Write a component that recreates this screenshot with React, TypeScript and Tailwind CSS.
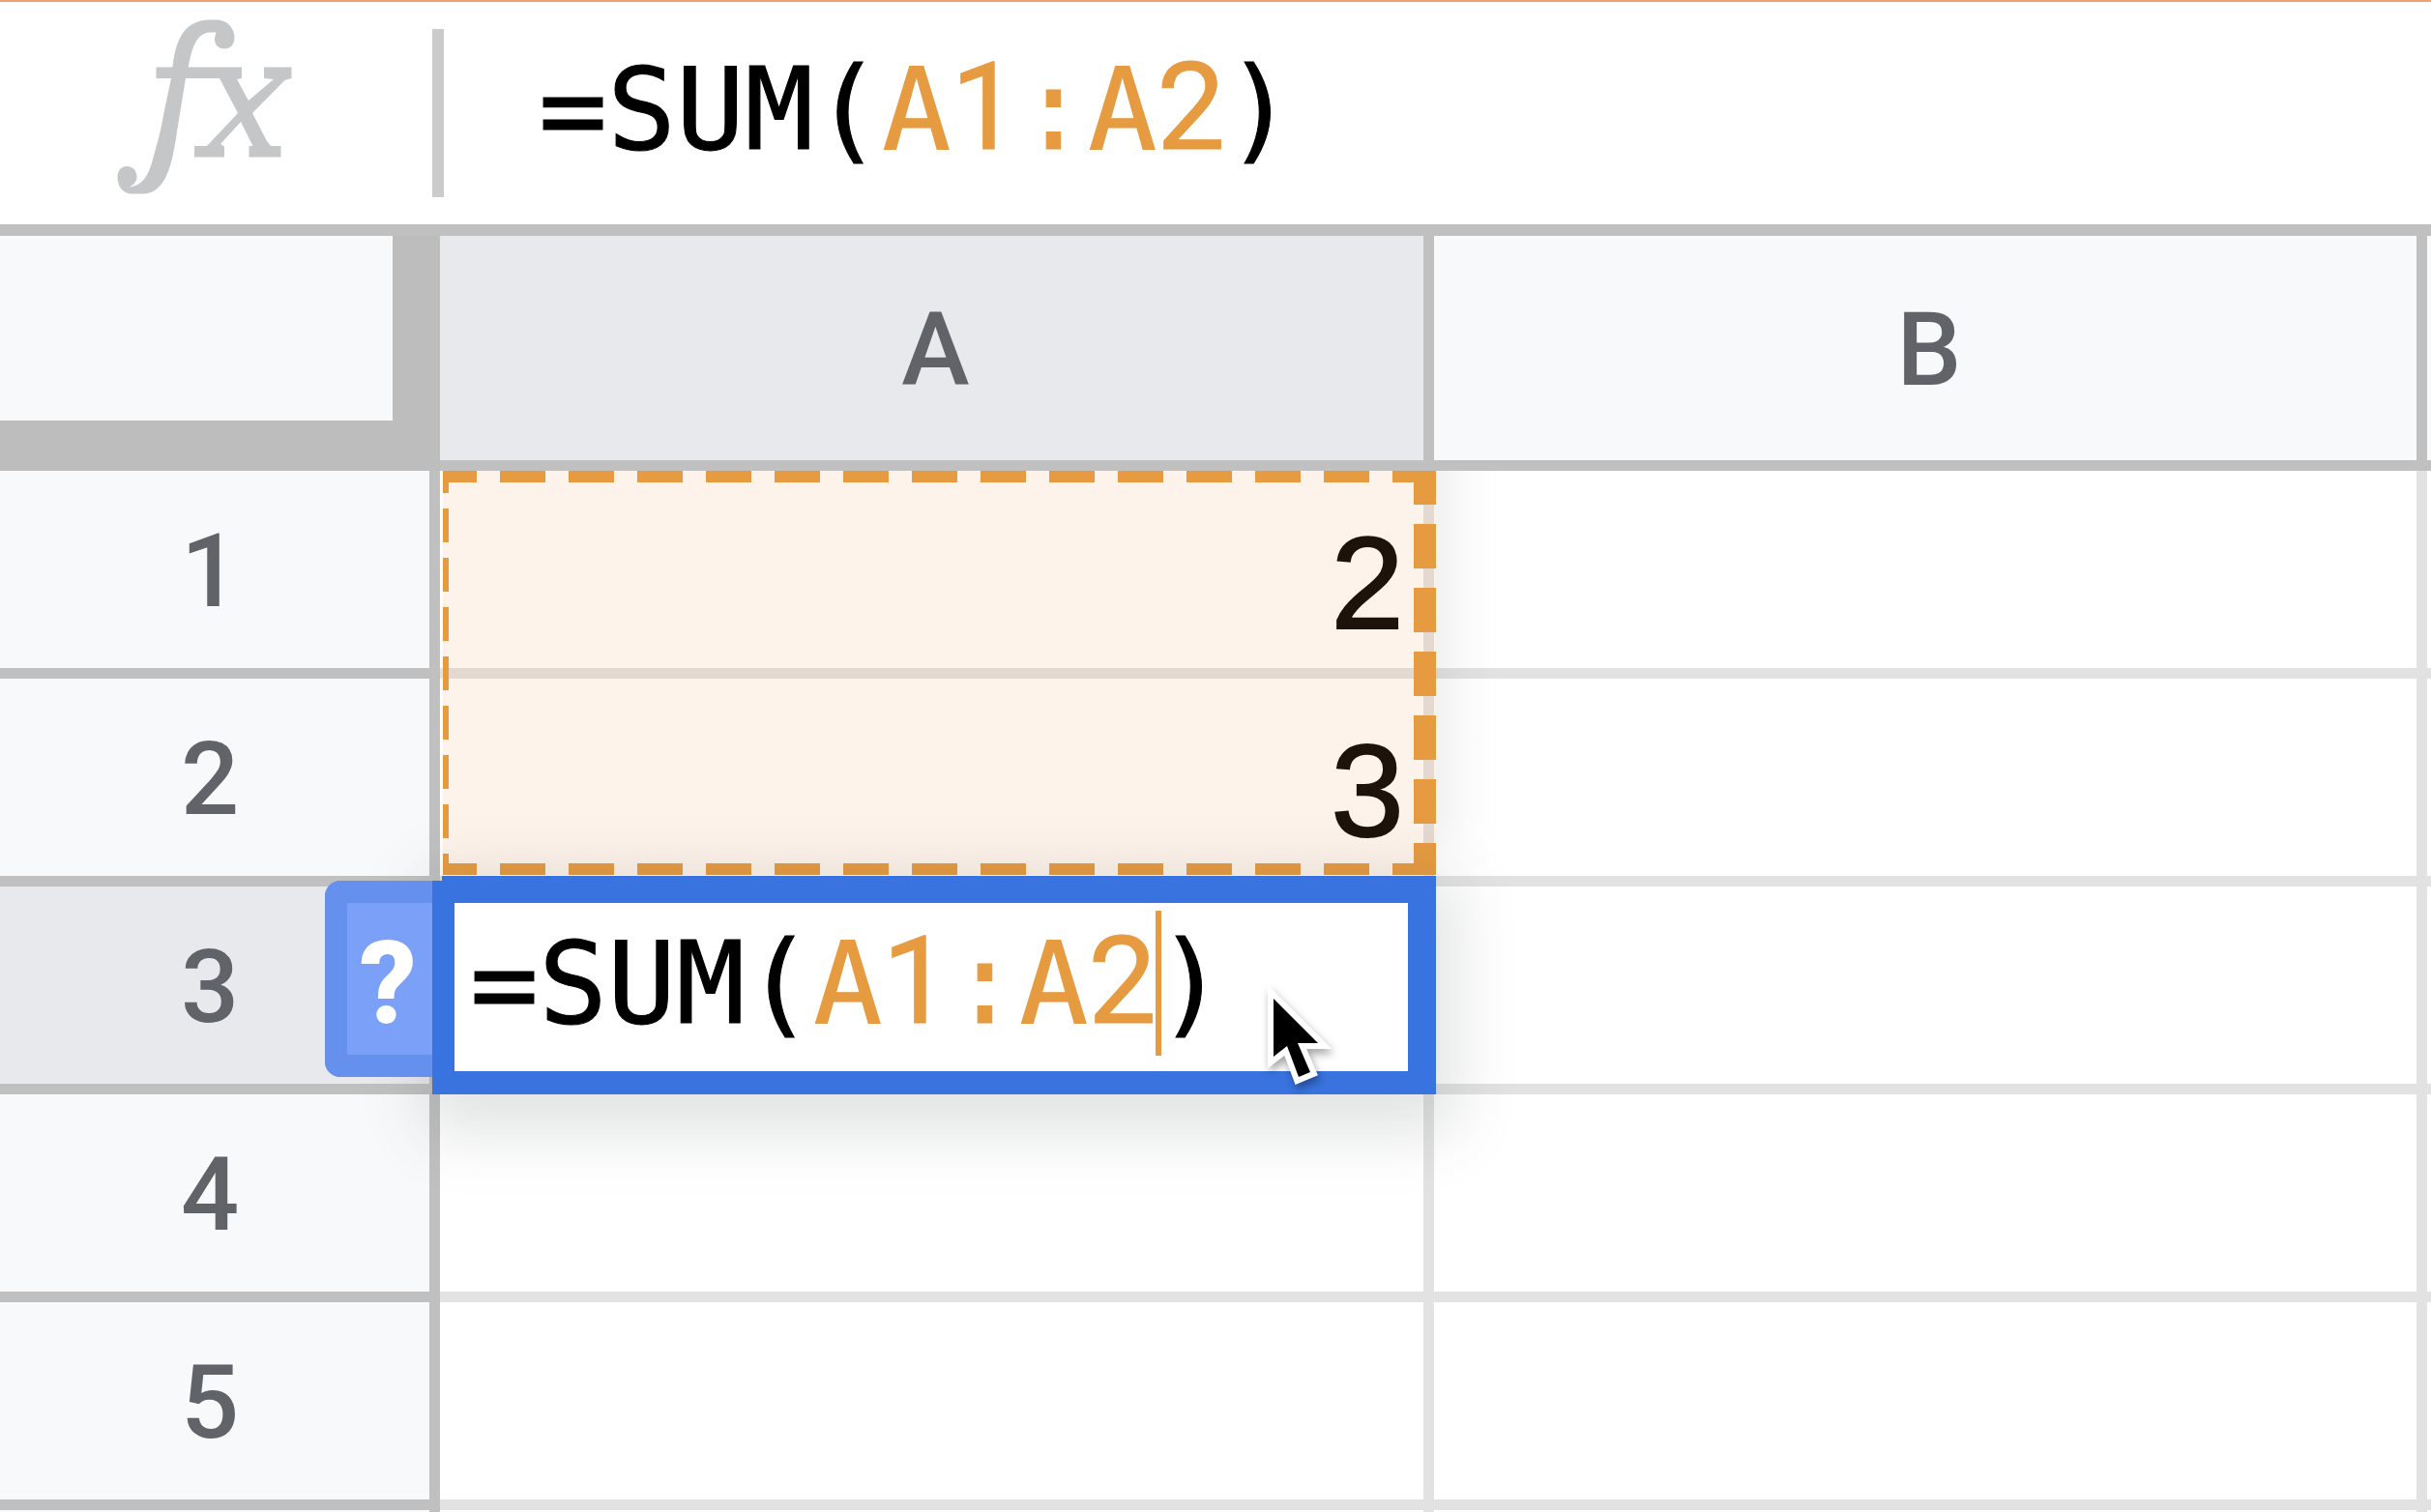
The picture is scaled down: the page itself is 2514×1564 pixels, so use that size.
import { useState } from "react";

const ROWS = [
  { n: 1, a: "2" },
  { n: 2, a: "3" },
  { n: 3, a: "" },
  { n: 4, a: "" },
  { n: 5, a: "" },
];

function FxIcon() {
  return (
    <svg viewBox="120 18 184 186" className="h-[186px] w-[184px] shrink-0 fill-[#c4c6c8]" aria-hidden="true">
      <path d="M161.500 69.500H178.500C181 48 187 20.500 217 20.500H224C236 20.500 242.500 30 242.500 39C242.500 46 238 50.500 232 50.500C226 50.500 222 46 222 41C222 38 223 36 223.500 33.500H217C203 34 198 51 194.800 69.500H250V81L245 82L257 104L283 82L273 81V69.500H301.500V81L294.500 83L261 117L276 146L280 151H290.500V162.500H257.500V151H261.500L249 126L228 149L232 151.500V162.500H201V151H214L246 117L227 81H192L183 136C178 172 171 200.500 147 200.500H137C127 200.500 121.500 193 121.500 183C121.500 177 125 172 131 172C138 172 141.500 177 141.500 183C141.500 188 138 191 134 193.500C147 192 153 183 158 165C163 147 167 132 169 119L177 81H161.500Z" />
    </svg>
  );
}

function Formula({ caret = false }: { caret?: boolean }) {
  return (
    <div
      aria-hidden="true"
      className="relative whitespace-pre font-['DejaVu_Sans_Mono',monospace] text-[118px] leading-[150px] text-black [-webkit-text-stroke:1px_currentColor]"
    >
      =SUM(
      <span className="text-[#e69b41]">
        A<Digit>1</Digit>:A<Digit>2</Digit>
      </span>
      {caret && <span className="absolute top-0 -ml-px h-[150px] w-[6px] bg-[#e69b41]" />}
      )
    </div>
  );
}

function Digit({ children }: { children: string }) {
  return <span className="font-[Roboto,sans-serif] text-[126px] leading-none">{children}</span>;
}

function RangeHighlight() {
  return (
    <div className="pointer-events-none absolute left-[3px] top-0 z-10 h-[418px] w-[1027px] bg-[#f29c4f]/12">
      <div className="absolute inset-x-0 top-0 h-3 bg-[repeating-linear-gradient(90deg,#e69b41_0_35px,transparent_35px_59px,#e69b41_59px_71px)]" />
      <div className="absolute inset-x-0 bottom-0 h-3 bg-[repeating-linear-gradient(90deg,#e69b41_0_35px,transparent_35px_59px,#e69b41_59px_71px)]" />
      <div className="absolute inset-y-0 left-0 w-1.5 bg-[repeating-linear-gradient(180deg,#e69b41_0_23px,transparent_23px_39px,#e69b41_39px_51px)]" />
      <div className="absolute inset-y-0 right-0 w-[23px] bg-[repeating-linear-gradient(180deg,#e69b41_0_35px,transparent_35px_55px,#e69b41_55px_66px)]" />
      <div className="absolute inset-y-0 left-full w-16 bg-[linear-gradient(90deg,rgba(60,64,67,0.07),rgba(60,64,67,0.02)_55%,transparent)] [mask-image:linear-gradient(#000_85%,transparent)]" />
    </div>
  );
}

function Pointer() {
  return (
    <svg
      viewBox="1300 1010 90 130"
      className="pointer-events-none absolute left-[830px] top-[76px] z-10 h-[130px] w-[90px] drop-shadow-[2px_5px_4px_rgba(0,0,0,0.35)]"
      aria-hidden="true"
    >
      <path
        d="M1317 1033V1093L1331 1082L1343 1114L1355 1109L1342 1079H1363Z"
        fill="#000"
        stroke="#fff"
        strokeWidth="12"
        strokeLinejoin="miter"
        paintOrder="stroke"
      />
    </svg>
  );
}

function CellEditor({ value, onChange }: { value: string; onChange: (v: string) => void }) {
  return (
    <>
      <div className="absolute left-[2px] top-[-11px] z-20 h-[226px] w-[1028px] bg-[#3873df] shadow-[0_20px_61px_20px_rgba(60,64,67,0.15)]" />
      <button
        type="button"
        aria-label="Formula help"
        className="absolute left-[-119px] top-[-6px] z-20 flex h-[203px] w-[111px] items-center justify-center rounded-l-[16px] border-[23px] border-r-0 border-[#6690ee] bg-[#7aa0f8] pr-1 pt-2 font-[Roboto,sans-serif] text-[116px] font-bold leading-none text-white"
      >
        ?
      </button>
      <div className="absolute left-[-8px] top-[-6px] z-20 flex h-[221px] w-[1032px] items-center border-[23px] border-b-[24px] border-[#3873df] bg-white pb-2 pl-4">
        <Formula caret />
        <input
          aria-label="Cell A3"
          value={value}
          onChange={(e) => onChange(e.target.value)}
          className="absolute inset-0 bg-transparent pl-4 font-['DejaVu_Sans_Mono',monospace] text-[118px] text-transparent outline-none"
        />
        <Pointer />
      </div>
    </>
  );
}

const head = "border-b-[11px] border-r-[11px] border-[#c0c0c0] pb-0 pt-1 text-center align-middle font-[Roboto,sans-serif] text-[106px] font-medium leading-none text-[#606368]";
const cell = "relative border-b-[11px] border-r-[11px] border-[#e2e2e2] bg-white p-0";

export default function App() {
  const [formula, setFormula] = useState("=SUM(A1:A2)");

  return (
    <main className="h-screen overflow-hidden bg-white">
      <header className="flex h-[244px] items-center border-b-[12px] border-t-2 border-b-[#c0c0c0] border-t-[#e9a271]">
        <div className="flex w-[447px] shrink-0 justify-center pb-3 pr-[23px]">
          <FxIcon />
        </div>
        <div className="h-[174px] w-3 shrink-0 bg-[#cbcbcb]" />
        <div className="relative flex h-full flex-1 items-center pb-2 pl-[98px]">
          <Formula />
          <input
            aria-label="Formula bar"
            value={formula}
            onChange={(e) => setFormula(e.target.value)}
            className="absolute inset-0 bg-transparent pl-[98px] font-['DejaVu_Sans_Mono',monospace] text-[118px] text-transparent outline-none"
          />
        </div>
      </header>

      <table className="w-full table-fixed border-separate border-spacing-0">
        <colgroup>
          <col className="w-[455px]" />
          <col className="w-[1028px]" />
          <col className="w-[1027px]" />
          <col />
        </colgroup>
        <thead>
          <tr className="h-[243px]">
            <td className="border-b-[52px] border-r-[49px] border-[#bdbdbd] bg-[#f8f9fb] p-0" />
            <th scope="col" className={`${head} bg-[#e8e9ed] pl-2 pr-0`}>A</th>
            <th scope="col" className={`${head} bg-[#f8f9fb] pl-2 pr-0`}>B</th>
            <td className="border-b-[11px] border-[#c0c0c0] bg-[#f8f9fb] p-0" />
          </tr>
        </thead>
        <tbody>
          {ROWS.map((row) => (
            <tr key={row.n} className="h-[215px]">
              <th scope="row" className={`${head} pl-0 pr-2.5 ${row.n === 3 ? "bg-[#e8e9ed]" : "bg-[#f8f9fb]"}`}>
                {row.n}
              </th>
              <td
                className={`${cell} pb-2.5 pr-5 text-right align-bottom font-['Liberation_Sans',sans-serif] text-[136px] leading-[156px] text-black [-webkit-text-stroke:2px_currentColor]`}
              >
                {row.a}
                {row.n === 1 && <RangeHighlight />}
                {row.n === 3 && <CellEditor value={formula} onChange={setFormula} />}
              </td>
              <td className={cell} />
              <td className="border-b-[11px] border-[#e2e2e2] bg-white p-0" />
            </tr>
          ))}
          <tr className="h-[215px]">
            <td className="border-r-[11px] border-[#c0c0c0] bg-[#f8f9fb] p-0" />
            <td className={cell} />
            <td className={cell} />
            <td className="bg-white p-0" />
          </tr>
        </tbody>
      </table>
    </main>
  );
}
